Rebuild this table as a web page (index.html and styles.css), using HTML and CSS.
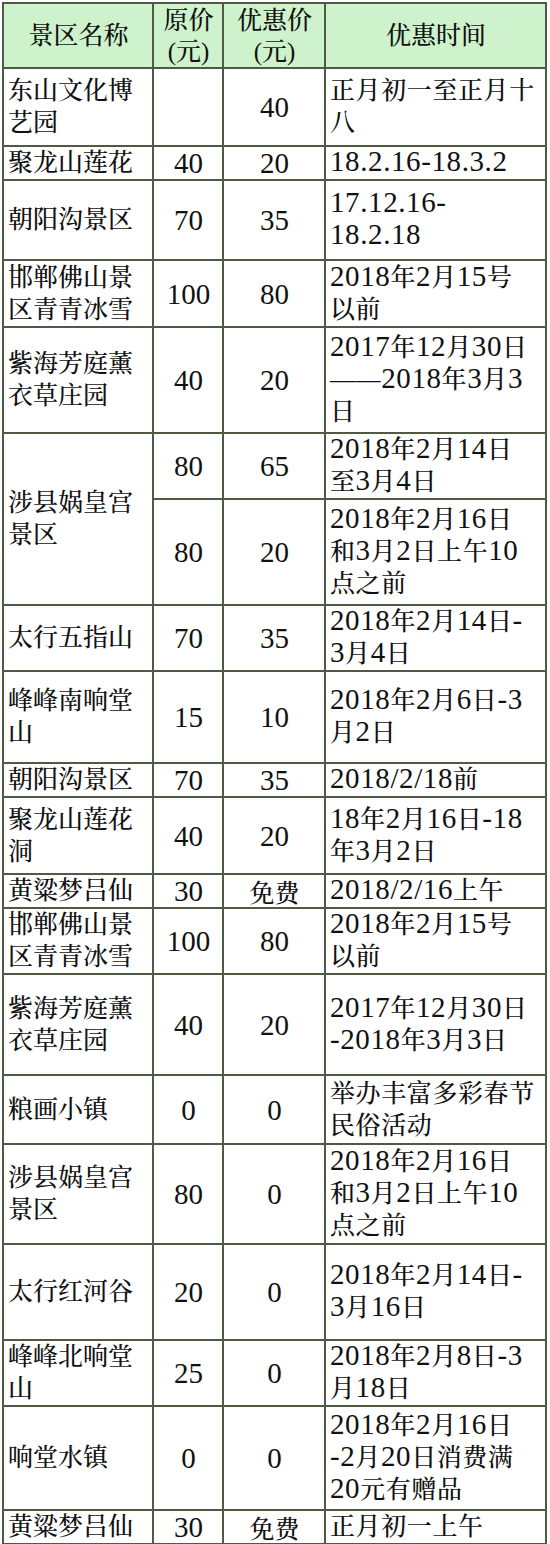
FILE: index.html
```
<!DOCTYPE html>
<html lang="zh-CN">
<head>
<meta charset="utf-8">
<title>景区优惠价格表</title>
<link rel="stylesheet" href="styles.css">
</head>
<body>
<table class="price-table">
  <colgroup>
    <col class="c-name">
    <col class="c-orig">
    <col class="c-disc">
    <col class="c-time">
  </colgroup>
  <thead>
    <tr class="h65">
      <th>景区名称</th>
      <th>原价<br>(元)</th>
      <th>优惠价<br>(元)</th>
      <th>优惠时间</th>
    </tr>
  </thead>
  <tbody>
    <tr class="h78">
      <td class="name">东山文化博<br>艺园</td>
      <td class="num"></td>
      <td class="num">40</td>
      <td class="time">正月初一至正月十<br>八</td>
    </tr>
    <tr class="h33">
      <td class="name">聚龙山莲花</td>
      <td class="num">40</td>
      <td class="num">20</td>
      <td class="time"><span class="d">18.2.16-18.3.2</span></td>
    </tr>
    <tr class="h80">
      <td class="name">朝阳沟景区</td>
      <td class="num">70</td>
      <td class="num">35</td>
      <td class="time"><span class="d">17.12.16-</span><br><span class="d">18.2.18</span></td>
    </tr>
    <tr class="h67">
      <td class="name">邯郸佛山景<br>区青青冰雪</td>
      <td class="num">100</td>
      <td class="num">80</td>
      <td class="time"><span class="d">2018</span>年<span class="d">2</span>月<span class="d">15</span>号<br>以前</td>
    </tr>
    <tr class="h106">
      <td class="name">紫海芳庭薰<br>衣草庄园</td>
      <td class="num">40</td>
      <td class="num">20</td>
      <td class="time"><span class="d">2017</span>年<span class="d">12</span>月<span class="d">30</span>日<br>——<span class="d">2018</span>年<span class="d">3</span>月<span class="d">3</span><br>日</td>
    </tr>
    <tr class="h66">
      <td class="name" rowspan="2">涉县娲皇宫<br>景区</td>
      <td class="num">80</td>
      <td class="num">65</td>
      <td class="time"><span class="d">2018</span>年<span class="d">2</span>月<span class="d">14</span>日<br>至<span class="d">3</span>月<span class="d">4</span>日</td>
    </tr>
    <tr class="h106">
      <td class="num">80</td>
      <td class="num">20</td>
      <td class="time"><span class="d">2018</span>年<span class="d">2</span>月<span class="d">16</span>日<br>和<span class="d">3</span>月<span class="d">2</span>日上午<span class="d">10</span><br>点之前</td>
    </tr>
    <tr class="h66">
      <td class="name">太行五指山</td>
      <td class="num">70</td>
      <td class="num">35</td>
      <td class="time"><span class="d">2018</span>年<span class="d">2</span>月<span class="d">14</span>日<span class="d">-</span><br><span class="d">3</span>月<span class="d">4</span>日</td>
    </tr>
    <tr class="h92">
      <td class="name">峰峰南响堂<br>山</td>
      <td class="num">15</td>
      <td class="num">10</td>
      <td class="time"><span class="d">2018</span>年<span class="d">2</span>月<span class="d">6</span>日<span class="d">-3</span><br>月<span class="d">2</span>日</td>
    </tr>
    <tr class="h34">
      <td class="name">朝阳沟景区</td>
      <td class="num">70</td>
      <td class="num">35</td>
      <td class="time"><span class="d">2018/2/18</span>前</td>
    </tr>
    <tr class="h77">
      <td class="name">聚龙山莲花<br>洞</td>
      <td class="num">40</td>
      <td class="num">20</td>
      <td class="time"><span class="d">18</span>年<span class="d">2</span>月<span class="d">16</span>日<span class="d">-18</span><br>年<span class="d">3</span>月<span class="d">2</span>日</td>
    </tr>
    <tr class="h33">
      <td class="name">黄粱梦吕仙</td>
      <td class="num">30</td>
      <td class="num cjk">免费</td>
      <td class="time"><span class="d">2018/2/16</span>上午</td>
    </tr>
    <tr class="h66">
      <td class="name">邯郸佛山景<br>区青青冰雪</td>
      <td class="num">100</td>
      <td class="num">80</td>
      <td class="time"><span class="d">2018</span>年<span class="d">2</span>月<span class="d">15</span>号<br>以前</td>
    </tr>
    <tr class="h101">
      <td class="name">紫海芳庭薰<br>衣草庄园</td>
      <td class="num">40</td>
      <td class="num">20</td>
      <td class="time"><span class="d">2017</span>年<span class="d">12</span>月<span class="d">30</span>日<br><span class="d">-2018</span>年<span class="d">3</span>月<span class="d">3</span>日</td>
    </tr>
    <tr class="h69">
      <td class="name">粮画小镇</td>
      <td class="num">0</td>
      <td class="num">0</td>
      <td class="time">举办丰富多彩春节<br>民俗活动</td>
    </tr>
    <tr class="h100">
      <td class="name">涉县娲皇宫<br>景区</td>
      <td class="num">80</td>
      <td class="num">0</td>
      <td class="time"><span class="d">2018</span>年<span class="d">2</span>月<span class="d">16</span>日<br>和<span class="d">3</span>月<span class="d">2</span>日上午<span class="d">10</span><br>点之前</td>
    </tr>
    <tr class="h96">
      <td class="name">太行红河谷</td>
      <td class="num">20</td>
      <td class="num">0</td>
      <td class="time"><span class="d">2018</span>年<span class="d">2</span>月<span class="d">14</span>日<span class="d">-</span><br><span class="d">3</span>月<span class="d">16</span>日</td>
    </tr>
    <tr class="h66">
      <td class="name">峰峰北响堂<br>山</td>
      <td class="num">25</td>
      <td class="num">0</td>
      <td class="time"><span class="d">2018</span>年<span class="d">2</span>月<span class="d">8</span>日<span class="d">-3</span><br>月<span class="d">18</span>日</td>
    </tr>
    <tr class="h104">
      <td class="name">响堂水镇</td>
      <td class="num">0</td>
      <td class="num">0</td>
      <td class="time"><span class="d">2018</span>年<span class="d">2</span>月<span class="d">16</span>日<br><span class="d">-2</span>月<span class="d">20</span>日消费满<br><span class="d">20</span>元有赠品</td>
    </tr>
    <tr class="h33">
      <td class="name">黄粱梦吕仙</td>
      <td class="num">30</td>
      <td class="num cjk">免费</td>
      <td class="time">正月初一上午</td>
    </tr>
  </tbody>
</table>
</body>
</html>
```
FILE: styles.css
```
html, body {
  margin: 0;
  padding: 0;
  background: #ffffff;
}

body {
  font-family: "Liberation Serif", "Noto Serif CJK SC", "Noto Sans CJK SC", serif;
  color: #111111;
}

.price-table {
  margin: 2px 0 0 2px;
  width: 545px;
  table-layout: fixed;
  border-collapse: collapse;
  font-size: 25px;
  line-height: 32px;
}

.c-name { width: 150px; }
.c-orig { width: 70px; }
.c-disc { width: 102px; }
.c-time { width: 221px; }

.price-table th,
.price-table td {
  border: 2px solid #4e5a44;
  padding: 0 3px 0 4px;
  vertical-align: middle;
  font-weight: 500;
  white-space: nowrap;
  overflow: hidden;
}

.price-table th {
  background: #cef3cc;
  text-align: center;
  line-height: 31px;
}

.name { text-align: left; }

.time {
  text-align: left;
  letter-spacing: 0.6px;
}

.num {
  text-align: center;
  font-size: 29px;
  font-family: "Liberation Serif", "Noto Serif CJK SC", serif;
}

.num.cjk {
  font-size: 25px;
  font-family: "Noto Serif CJK SC", "Noto Sans CJK SC", serif;
}

.d {
  font-size: 29px;
  line-height: 0;
  font-family: "Liberation Serif", "Noto Serif CJK SC", serif;
}

.h33 { height: 33px; }
.h34 { height: 34px; }
.h65 { height: 65px; }
.h66 { height: 66px; }
.h67 { height: 67px; }
.h69 { height: 69px; }
.h77 { height: 77px; }
.h78 { height: 78px; }
.h80 { height: 80px; }
.h92 { height: 92px; }
.h96 { height: 96px; }
.h100 { height: 100px; }
.h101 { height: 101px; }
.h104 { height: 104px; }
.h106 { height: 106px; }
```
